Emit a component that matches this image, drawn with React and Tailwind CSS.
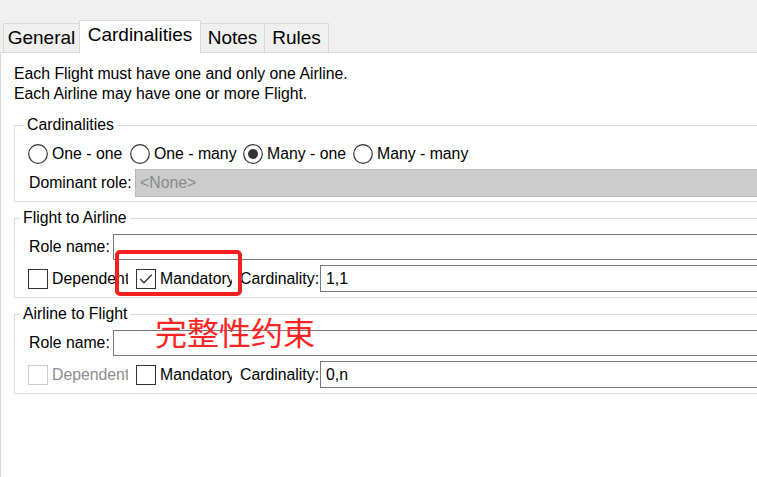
import React from "react";

function Radio({ label, checked, className }) {
  return (
    <div className={"flex items-center gap-[4px] " + className}>
      <svg width="20" height="20" viewBox="0 0 20 20" className="shrink-0">
        <circle cx="10" cy="10" r="9.3" fill="white" stroke="#333333" strokeWidth="1.2" />
        {checked && <circle cx="10" cy="10" r="5" fill="#333333" />}
      </svg>
      <span className="whitespace-nowrap">{label}</span>
    </div>
  );
}

function Check({ label, checked, disabled, className }) {
  return (
    <div className={"flex items-center gap-[4px] overflow-hidden whitespace-nowrap " + className}>
      <div
        className={
          "w-[20px] h-[20px] shrink-0 border bg-white flex items-center justify-center " +
          (disabled ? "border-[#cccccc]" : "border-[#333333]")
        }
      >
        {checked && (
          <svg width="18" height="18" viewBox="0 0 18 18">
            <path d="M3.2 9 L7 12.8 L14.8 4.8" fill="none" stroke="#333333" strokeWidth="1.3" />
          </svg>
        )}
      </div>
      <span className={disabled ? "text-[#8d8d8d]" : ""}>{label}</span>
    </div>
  );
}

function RoleGroup({ title, card, depDisabled, mandatory, className }) {
  return (
    <fieldset className={"border border-[#dcdcdc] mr-[-40px] min-w-0 " + className}>
      <legend className="ml-[5px] px-[3px] leading-[20px]">{title}</legend>
      <div className="pl-[13px] pt-[6px] pb-[5px]">
        <div className="flex h-[26px] items-center">
          <div className="w-[85px] pl-px shrink-0 whitespace-nowrap">Role name:</div>
          <div className="flex-1 h-[26px] border border-[#7a7a7a] bg-white"></div>
        </div>
        <div className="mt-[5px] flex h-[27px] items-center">
          <Check label="Dependent" disabled={depDisabled} className="w-[100px] shrink-0" />
          <Check label="Mandatory" checked={mandatory} className="w-[96px] ml-[8px] shrink-0" />
          <div className="w-[88px] pl-[8px] shrink-0 whitespace-nowrap">Cardinality:</div>
          <div className="flex-1 h-[27px] border border-[#7a7a7a] bg-white pl-[5px] flex items-center">
            {card}
          </div>
        </div>
      </div>
    </fieldset>
  );
}

export default function App() {
  return (
    <div className="relative w-[757px] h-[477px] overflow-hidden bg-[#f0f0f0] flex flex-col font-['Liberation_Sans',Arial,sans-serif] text-[15.8px] text-black">
      {/* Tabs */}
      <div className="flex items-end h-[52px] pl-[3px] shrink-0 text-[19px]">
        <div className="h-[29px] w-[77px] border border-b-0 border-[#d9d9d9] bg-[#f0f0f0] flex items-center justify-center">
          General
        </div>
        <div className="relative z-10 -mb-px -ml-px h-[33px] w-[122px] border border-b-0 border-[#d9d9d9] bg-white flex items-start justify-center pt-[2px] leading-[24px]">
          Cardinalities
        </div>
        <div className="-ml-px h-[29px] w-[65px] border border-b-0 border-[#d9d9d9] bg-[#f0f0f0] flex items-center justify-center">
          Notes
        </div>
        <div className="-ml-px h-[29px] w-[65px] border border-b-0 border-[#d9d9d9] bg-[#f0f0f0] flex items-center justify-center">
          Rules
        </div>
      </div>

      {/* Panel */}
      <div className="flex-1 bg-white border-t border-l border-[#d9d9d9] pl-[13px] pt-[11px]">
        <div className="leading-[20px]">
          <p>Each Flight must have one and only one Airline.</p>
          <p>Each Airline may have one or more Flight.</p>
        </div>

        <fieldset className="mt-[11px] border border-[#dcdcdc] mr-[-40px] min-w-0">
          <legend className="ml-[9px] px-[3px] leading-[20px]">Cardinalities</legend>
          <div className="pl-[13px] pt-[9px] pb-[4px]">
            <div className="flex h-[20px] items-center">
              <Radio label="One - one" className="w-[102px] shrink-0" />
              <Radio label="One - many" className="w-[113px] shrink-0" />
              <Radio label="Many - one" checked className="w-[110px] shrink-0" />
              <Radio label="Many - many" className="shrink-0" />
            </div>
            <div className="mt-[5px] flex h-[28px] items-center">
              <div className="w-[107px] pl-px shrink-0 whitespace-nowrap">Dominant role:</div>
              <div className="flex-1 h-[28px] bg-[#cccccc] border border-[#bababa] pl-[4px] flex items-center text-[#8a8a8a]">
                {"<None>"}
              </div>
            </div>
          </div>
        </fieldset>

        <RoleGroup title="Flight to Airline" card="1,1" mandatory className="mt-[6px]" />
        <RoleGroup title="Airline to Flight" card="0,n" depDisabled className="mt-[6px]" />
      </div>

      {/* Annotation overlay */}
      <div className="absolute left-[115px] top-[250px] w-[127px] h-[46px] border-4 border-[#f42020] rounded-[5px] pointer-events-none"></div>
      <div className="absolute left-[155px] top-[315px] text-[32px] leading-none text-[#ff2424] font-['Noto_Sans_CJK_SC',sans-serif] whitespace-nowrap">
        完整性约束
      </div>
    </div>
  );
}
